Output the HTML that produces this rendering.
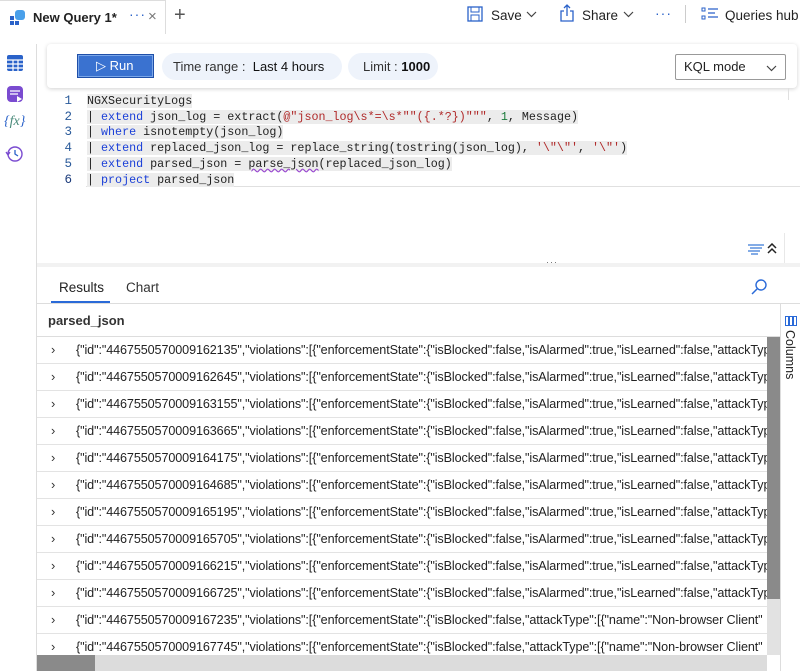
<!DOCTYPE html>
<html><head><style>
*{box-sizing:border-box;margin:0;padding:0}
body{width:800px;height:671px;overflow:hidden;background:#fff;font-family:"Liberation Sans",sans-serif;position:relative;color:#222}
.abs{position:absolute}
.code{font-family:"Liberation Mono",monospace;font-size:11.7px;line-height:15.7px;white-space:pre}
.code .l{background:#ececec}
.kw{color:#1a3fd8}.st{color:#b02a2a}.nm{color:#1a7a3a}
.row{position:absolute;left:37px;width:730px;height:27px;border-bottom:1px solid #e3e3e3;font-size:12.6px;white-space:nowrap;overflow:hidden;line-height:26px}
.row .c{position:absolute;left:14px;color:#333;font-size:13px}
.row .t{position:absolute;left:39px;letter-spacing:-0.1px}
</style></head><body>
<div class="abs" style="left:0;top:0;width:166px;height:34px;border-right:1px solid #ddd;border-top:1px solid #ddd"></div>
<svg class="abs" style="left:10px;top:9px" width="16" height="16"><rect x="0" y="7" width="4" height="4" fill="#2a62c9"/><rect x="0" y="12" width="4" height="4" fill="#2a62c9"/><rect x="5" y="12" width="4" height="4" fill="#2a62c9"/><rect x="5" y="1" width="10" height="10" rx="3" fill="#4aa0ea"/></svg>
<div class="abs" style="left:33px;top:10px;font-size:13px;font-weight:bold">New Query 1*</div>
<div class="abs" style="left:129px;top:6px;font-size:14px;color:#2a62c9;letter-spacing:1px">···</div>
<div class="abs" style="left:148px;top:8px;font-size:15px;color:#777">×</div>
<div class="abs" style="left:174px;top:4px;font-size:20px;color:#555">+</div>
<svg class="abs" style="left:467px;top:6px" width="16" height="16"><rect x="1" y="1" width="14" height="14" fill="none" stroke="#2a62c9" stroke-width="1.3"/><rect x="4" y="1" width="8" height="5" fill="none" stroke="#2a62c9"/><rect x="4" y="9" width="8" height="6" fill="none" stroke="#2a62c9"/></svg>
<div class="abs" style="left:491px;top:8px;font-size:13.5px">Save</div>
<svg class="abs" style="left:526px;top:11px" width="11" height="7"><path d="M1 1L5.5 5.5L10 1" fill="none" stroke="#444" stroke-width="1.2"/></svg>
<svg class="abs" style="left:560px;top:4px" width="14" height="18"><path d="M4 7H1V17H13V7H10M7 12V1M4 4L7 1L10 4" fill="none" stroke="#2a62c9" stroke-width="1.3"/></svg>
<div class="abs" style="left:582px;top:8px;font-size:13.5px">Share</div>
<svg class="abs" style="left:623px;top:11px" width="11" height="7"><path d="M1 1L5.5 5.5L10 1" fill="none" stroke="#444" stroke-width="1.2"/></svg>
<div class="abs" style="left:655px;top:5px;font-size:14px;color:#2a62c9;letter-spacing:1px">···</div>
<div class="abs" style="left:685px;top:5px;width:1px;height:18px;background:#ccc"></div>
<svg class="abs" style="left:701px;top:7px" width="18" height="14"><rect x="1" y="1" width="3" height="3" fill="none" stroke="#2a62c9"/><rect x="1" y="9" width="3" height="3" fill="none" stroke="#2a62c9"/><path d="M7 2H17M7 6H14M7 10H17" stroke="#2a62c9" stroke-width="1.2"/></svg>
<div class="abs" style="left:725px;top:8px;font-size:13.5px">Queries hub</div>
<div class="abs" style="left:36px;top:44px;width:1px;height:627px;background:#ddd"></div>
<svg class="abs" style="left:6px;top:54px" width="18" height="18"><rect x="1" y="1" width="16" height="16" rx="2" fill="#2a62c9"/><path d="M1 6H17M1 10H17M1 14H17M7 6V17M12 6V17" stroke="#fff" stroke-width="1.2"/></svg>
<svg class="abs" style="left:6px;top:85px" width="18" height="18"><rect x="1" y="1" width="16" height="16" rx="4" fill="#7a4bd0"/><path d="M4 6H14M4 9H12" stroke="#fff" stroke-width="1.3"/><path d="M11 11L16 14L11 17Z" fill="#fff"/></svg>
<div class="abs" style="left:4px;top:114px;font-size:14px;color:#2a62c9;font-style:italic;font-family:'Liberation Serif',serif">{<span style="color:#4a8a7a">fx</span>}</div>
<svg class="abs" style="left:5px;top:145px" width="18" height="18"><circle cx="10" cy="9" r="7" fill="none" stroke="#7a4bd0" stroke-width="1.4"/><path d="M10 5V9L13 11" fill="none" stroke="#2a62c9" stroke-width="1.3"/><path d="M1 7L3 10L5 7" fill="none" stroke="#7a4bd0" stroke-width="1.3"/></svg>
<div class="abs" style="left:47px;top:44px;width:750px;height:44px;background:#fff;border-radius:4px;box-shadow:0 1px 4px rgba(0,0,0,.18)"></div>
<div class="abs" style="left:77px;top:54px;width:77px;height:24px;background:#3a72d0;border:1px solid #1f4fa8;box-shadow:inset 0 0 0 1px #7aa6e8;color:#fff;font-size:13px;line-height:22px;padding-left:18px">▷ Run</div>
<div class="abs" style="left:162px;top:53px;width:180px;height:27px;background:#eef3fb;border-radius:14px;font-size:13px;line-height:27px;padding-left:11px;color:#333">Time range : &nbsp;<span style="color:#111">Last 4 hours</span></div>
<div class="abs" style="left:348px;top:53px;width:90px;height:27px;background:#eef3fb;border-radius:14px;font-size:13px;line-height:27px;padding-left:15px;color:#333">Limit : <b style="color:#111">1000</b></div>
<div class="abs" style="left:675px;top:54px;width:111px;height:26px;border:1px solid #999;border-radius:2px;font-size:13px;line-height:24px;padding-left:8px">KQL mode<svg style="position:absolute;right:8px;top:10px" width="11" height="7"><path d="M1 1L5.5 5.5L10 1" fill="none" stroke="#444" stroke-width="1.2"/></svg></div>
<div class="abs" style="left:86px;top:171px;width:714px;height:16px;border-bottom:1px solid #e0e0e0"></div>
<div class="abs code" style="left:56px;top:94px;color:#2a5a9a;text-align:right;width:16px;font-size:12.5px">1
2
3
4
5
<span style="color:#1a3a7a">6</span></div>
<div class="abs code" style="left:87px;top:94px"><span class="l">NGXSecurityLogs</span>
<span class="l">| <span class="kw">extend</span> json_log = extract(<span class="st">@"json_log\s*=\s*""({.*?})"""</span>, <span class="nm">1</span>, Message)</span>
<span class="l">| <span class="kw">where</span> isnotempty(json_log)</span>
<span class="l">| <span class="kw">extend</span> replaced_json_log = replace_string(tostring(json_log), <span class="st">'\"\"'</span>, <span class="st">'\"'</span>)</span>
<span class="l">| <span class="kw">extend</span> parsed_json = <span style="text-decoration:underline wavy #9a4ad0">parse_json</span>(replaced_json_log)</span>
<span class="l">| <span class="kw">project</span> parsed_json</span></div>
<div class="abs" style="left:788px;top:88px;width:1px;height:12px;background:#e0e0e0"></div>
<svg class="abs" style="left:747px;top:243px" width="20" height="12"><path d="M1 2H17M3 5H15M1 8H13M4 11H11" stroke="#3a7ad8" stroke-width="1.2"/></svg>
<svg class="abs" style="left:767px;top:243px" width="11" height="11"><path d="M1 5L5 1L9 5M1 10L5 6L9 10" fill="none" stroke="#222" stroke-width="1.5"/></svg>
<div class="abs" style="left:784px;top:233px;width:1px;height:30px;background:#e8e8e8"></div>
<div class="abs" style="left:37px;top:263px;width:763px;height:4px;background:#f2f2f2"></div>
<div class="abs" style="left:546px;top:257px;font-size:9px;color:#666;letter-spacing:1px">···</div>
<div class="abs" style="left:59px;top:280px;font-size:13.5px">Results</div>
<div class="abs" style="left:126px;top:280px;font-size:13.5px;color:#333">Chart</div>
<div class="abs" style="left:51px;top:301px;width:59px;height:2px;background:#2a6ad8"></div>
<div class="abs" style="left:37px;top:303px;width:763px;height:1px;background:#ddd"></div>
<svg class="abs" style="left:751px;top:278px" width="17" height="17"><circle cx="10" cy="7" r="5" fill="none" stroke="#2a6ad8" stroke-width="1.4"/><path d="M6 11L1 16" stroke="#2a6ad8" stroke-width="1.5"/></svg>
<div class="abs" style="left:48px;top:313px;font-size:13px;color:#333;font-weight:bold">parsed_json</div>
<div class="abs" style="left:37px;top:336px;width:743px;height:1px;background:#ddd"></div>
<div class="abs" style="left:780px;top:303px;width:1px;height:368px;background:#ddd"></div>
<svg class="abs" style="left:785px;top:316px" width="12" height="10"><rect x="0.5" y="0.5" width="3" height="9" fill="none" stroke="#2a6ad8"/><rect x="4.5" y="0.5" width="3" height="9" fill="none" stroke="#2a6ad8"/><rect x="8.5" y="0.5" width="3" height="9" fill="none" stroke="#2a6ad8"/></svg>
<div class="abs" style="left:783px;top:330px;font-size:12.5px;writing-mode:vertical-rl;color:#222">Columns</div>
<div class="row" style="top:337px"><span class="c">›</span><span class="t">{"id":"4467550570009162135","violations":[{"enforcementState":{"isBlocked":false,"isAlarmed":true,"isLearned":false,"attackType"</span></div>
<div class="row" style="top:364px"><span class="c">›</span><span class="t">{"id":"4467550570009162645","violations":[{"enforcementState":{"isBlocked":false,"isAlarmed":true,"isLearned":false,"attackType"</span></div>
<div class="row" style="top:391px"><span class="c">›</span><span class="t">{"id":"4467550570009163155","violations":[{"enforcementState":{"isBlocked":false,"isAlarmed":true,"isLearned":false,"attackType"</span></div>
<div class="row" style="top:418px"><span class="c">›</span><span class="t">{"id":"4467550570009163665","violations":[{"enforcementState":{"isBlocked":false,"isAlarmed":true,"isLearned":false,"attackType"</span></div>
<div class="row" style="top:445px"><span class="c">›</span><span class="t">{"id":"4467550570009164175","violations":[{"enforcementState":{"isBlocked":false,"isAlarmed":true,"isLearned":false,"attackType"</span></div>
<div class="row" style="top:472px"><span class="c">›</span><span class="t">{"id":"4467550570009164685","violations":[{"enforcementState":{"isBlocked":false,"isAlarmed":true,"isLearned":false,"attackType"</span></div>
<div class="row" style="top:499px"><span class="c">›</span><span class="t">{"id":"4467550570009165195","violations":[{"enforcementState":{"isBlocked":false,"isAlarmed":true,"isLearned":false,"attackType"</span></div>
<div class="row" style="top:526px"><span class="c">›</span><span class="t">{"id":"4467550570009165705","violations":[{"enforcementState":{"isBlocked":false,"isAlarmed":true,"isLearned":false,"attackType"</span></div>
<div class="row" style="top:553px"><span class="c">›</span><span class="t">{"id":"4467550570009166215","violations":[{"enforcementState":{"isBlocked":false,"isAlarmed":true,"isLearned":false,"attackType"</span></div>
<div class="row" style="top:580px"><span class="c">›</span><span class="t">{"id":"4467550570009166725","violations":[{"enforcementState":{"isBlocked":false,"isAlarmed":true,"isLearned":false,"attackType"</span></div>
<div class="row" style="top:607px"><span class="c">›</span><span class="t">{"id":"4467550570009167235","violations":[{"enforcementState":{"isBlocked":false,"attackType":[{"name":"Non-browser Client"</span></div>
<div class="row" style="top:634px;border:none"><span class="c">›</span><span class="t">{"id":"4467550570009167745","violations":[{"enforcementState":{"isBlocked":false,"attackType":[{"name":"Non-browser Client"</span></div>
<div class="abs" style="left:767px;top:337px;width:13px;height:318px;background:#e2e2e2"></div>
<div class="abs" style="left:767px;top:337px;width:13px;height:262px;background:#8a8a8a"></div>
<div class="abs" style="left:37px;top:655px;width:730px;height:16px;background:#dcdcdc"></div>
<div class="abs" style="left:37px;top:655px;width:58px;height:16px;background:#8a8a8a"></div>
</body></html>
